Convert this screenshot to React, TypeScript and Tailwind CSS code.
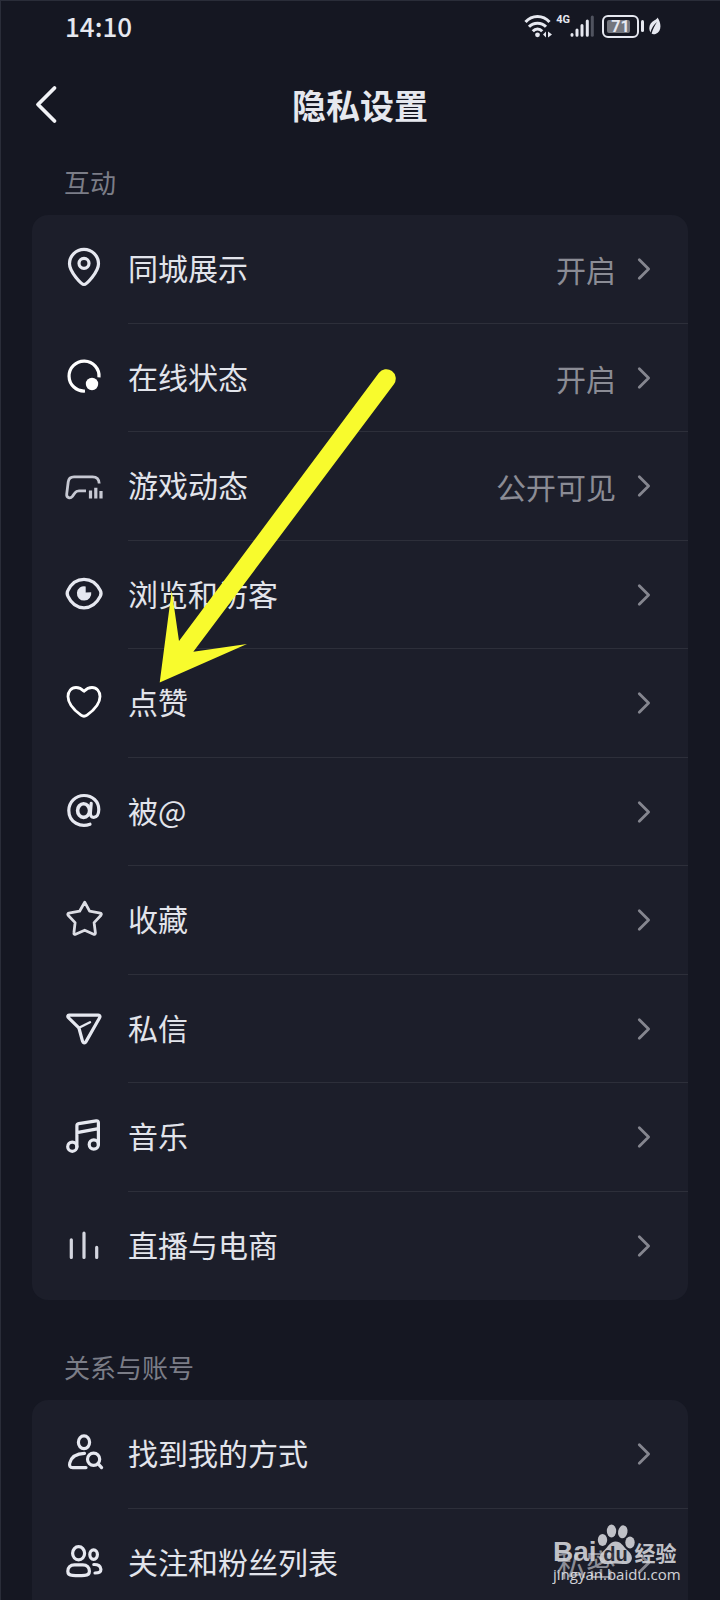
import type { ReactNode } from 'react'

type Item = {
  label: string
  icon: ReactNode
  value?: string
}

function Icon({ children, color = '#e6e8f0' }: { children: ReactNode; color?: string }) {
  return (
    <svg
      viewBox="0 0 40 40"
      className="w-10 h-10 shrink-0"
      fill="none"
      stroke={color}
      strokeWidth="3.2"
      strokeLinecap="round"
      strokeLinejoin="round"
      aria-hidden="true"
    >
      {children}
    </svg>
  )
}

const interaction: Item[] = [
  {
    label: '同城展示',
    value: '开启',
    icon: (
      <Icon>
        <path d="M20 37.5C17.5 37.5 5.5 25 5.5 16.8a14.5 14.5 0 0 1 29 0C34.5 25 22.5 37.5 20 37.5z" />
        <circle cx="20" cy="16.3" r="5" />
      </Icon>
    ),
  },
  {
    label: '在线状态',
    value: '开启',
    icon: (
      <Icon color="#ffffff">
        <path d="M35 21.3A15 15 0 1 0 21 35" strokeLinecap="butt" />
        <circle cx="28" cy="28" r="6.2" fill="#ffffff" stroke="none" />
      </Icon>
    ),
  },
  {
    label: '游戏动态',
    value: '公开可见',
    icon: (
      <Icon color="#c6c8d2">
        <path
          d="M35.2 19.5C35 15 33 12.8 28.5 12.8H10C6.5 12.8 4.6 14.5 4.2 18L2.7 30.2C2.3 34 6.3 35 8.4 32.4L11 28.8C12 27.3 13 26.8 15 26.8H22"
          strokeWidth="2.8"
          strokeLinecap="butt"
        />
        <path d="M26.5 26.5V34.5M31.8 23.8V34.5M37 27V34.5" strokeLinecap="butt" />
      </Icon>
    ),
  },
  {
    label: '浏览和访客',
    icon: (
      <Icon>
        <path d="M20 6.3C28 6.3 33 11 36.3 17.5C37.3 19.4 37.3 21.4 36.3 23.3C33 29.8 28 34.8 20 34.8S7 29.8 3.9 23.3C2.9 21.4 2.9 19.4 3.9 17.5C7 11 12 6.3 20 6.3z" />
        <path d="M21.7 13.4A7.2 7.2 0 1 0 27.2 19.2L21.7 19.6z" fill="#e6e8f0" stroke="none" />
      </Icon>
    ),
  },
  {
    label: '点赞',
    icon: (
      <Icon color="#ffffff">
        <path
          d="M20 10.3C17.5 7.7 14.8 6.5 12 6.5C7.2 6.5 4 10.5 4 15.5C4 23.5 10.5 29.5 17 34.2C19.2 35.8 20.8 35.8 23 34.2C29.5 29.5 36 23.5 36 15.5C36 10.5 32.8 6.5 28 6.5C25.2 6.5 22.5 7.7 20 10.3z"
          strokeWidth="2.8"
        />
      </Icon>
    ),
  },
  {
    label: '被@',
    icon: (
      <Icon>
        <path d="M26 34.2C17 37.5 4.8 33 4.8 20.5C4.8 12 11.5 5.5 20 5.5S34.8 11.5 34.8 19.5C34.8 24.5 32.5 27.3 29.8 27.3C27.5 27.3 26.2 25.8 26.4 23L27.2 13.3" />
        <ellipse cx="19.6" cy="20.6" rx="6" ry="6.8" strokeWidth="3.6" />
      </Icon>
    ),
  },
  {
    label: '收藏',
    icon: (
      <Icon color="#dcdde4">
        <path
          d="M20.7 4.2L25.6 13.2L36.3 15.2C37.4 15.4 37.7 16.4 37 17.2L30.1 24.6L31.4 34.9C31.5 36 30.6 36.7 29.6 36.2L20.7 32.2L11.6 36.2C10.6 36.7 9.7 36 9.9 34.9L11.1 24.6L4.1 17.2C3.4 16.4 3.8 15.4 4.9 15.2L15.6 13.2z"
          strokeWidth="2.8"
        />
      </Icon>
    ),
  },
  {
    label: '私信',
    icon: (
      <Icon>
        <path d="M5 8.2H34.4C36 8.2 36.3 9.5 35.6 10.7L22 34.6C21 36.4 19 36.2 18.5 34.2L15.2 22C15 21.2 14.7 20.7 14.1 20.1L4.4 10.6C3.4 9.6 3.8 8.2 5 8.2z" />
        <path d="M15.5 20.5L26 15.2" strokeWidth="2.4" />
      </Icon>
    ),
  },
  {
    label: '音乐',
    icon: (
      <Icon>
        <circle cx="8.3" cy="31.7" r="4.6" />
        <circle cx="29.8" cy="29.5" r="4.6" />
        <path d="M12.9 31.7V10.8C12.9 9.6 13.5 8.9 14.7 8.7L32.2 5.9C33.8 5.7 34.4 6.3 34.4 7.8V29.5M12.9 17.6L34.4 13.6" />
      </Icon>
    ),
  },
  {
    label: '直播与电商',
    icon: (
      <Icon color="#d4d6df">
        <path d="M7.3 15.8V33.4M20 9.2V33.4M32.7 23.4V33.4" />
      </Icon>
    ),
  },
]

const accounts: Item[] = [
  {
    label: '找到我的方式',
    icon: (
      <Icon>
        <ellipse cx="20" cy="10.3" rx="5.6" ry="6.4" />
        <path d="M20.5 21.3C13 21.5 7.5 24.5 5.8 30.8C5 33.8 6 35.6 8.8 35.6H22" />
        <circle cx="29.6" cy="27.2" r="6.1" />
        <path d="M34 31.6L37.6 35.6" />
      </Icon>
    ),
  },
  {
    label: '关注和粉丝列表',
    value: '私密',
    icon: (
      <Icon>
        <ellipse cx="14.6" cy="12.3" rx="6" ry="6.6" />
        <path d="M10.5 23.8H18.8C23 23.8 25.4 26.6 25.4 30.2C25.4 33.4 23.6 34.2 20.6 34.4C16.6 34.8 12.6 34.8 8.6 34.4C5.6 34.2 3.8 33.4 3.8 30.2C3.8 26.6 6.3 23.8 10.5 23.8z" />
        <ellipse cx="29.6" cy="13.6" rx="3.8" ry="4.7" />
        <path d="M29.8 23.5C34.2 23.3 36.8 25.2 36.9 28.4C37 31 35.4 31.9 31 32" />
      </Icon>
    ),
  },
]

function StatusBar() {
  return (
    <div className="h-[54px] pb-0.5 pl-[65px] pr-[59px] flex items-center justify-between text-[#e6e8f0]">
      <span className="text-[26px] leading-8 font-medium">14:10</span>
      <div className="flex items-center">
        <svg viewBox="0 0 28 24" className="w-7 h-6 mr-1" fill="none" stroke="currentColor" strokeWidth="3" aria-hidden="true">
          <path d="M1.5 8C8 .6 19 .6 25.5 8" />
          <path d="M5 12.8C9.6 8 17.4 8 22 12.8" />
          <path d="M8.8 17.2C11.4 14.4 15.6 14.4 18.2 17.2" />
          <circle cx="13.5" cy="20.8" r="2.4" fill="currentColor" stroke="none" />
          <path d="M19 20.5L22 17.5V23.5zM28 20.5L24 17.5V23.5z" fill="currentColor" stroke="none" />
        </svg>
        <span className="self-start font-['Liberation_Sans_Narrow','Roboto',sans-serif] text-[11px] leading-3 font-bold">4G</span>
        <svg viewBox="0 0 24 24" className="w-6 h-6 mr-2" fill="none" stroke="currentColor" strokeWidth="3" strokeLinecap="round" aria-hidden="true">
          <path d="M2 20.5V21.3M7 16V21.3M12 11.5V21.3M17.3 7V21.3" />
          <path d="M22.3 3V21.3" stroke="#50535f" />
        </svg>
        <div className="w-[37px] h-[23px] p-[3px] border-2 border-current rounded-md flex items-center relative">
          <div className="w-[23px] h-full bg-[#74767e] rounded-xs" />
          <span className="absolute inset-0 text-center text-base leading-5 font-bold font-['Roboto',sans-serif]">71</span>
        </div>
        <div className="w-[3px] h-3 ml-0.5 mr-1 rounded-sm bg-current" />
        <svg viewBox="0 0 13 19" className="w-[13px] h-[19px]" aria-hidden="true">
          <path d="M9.5 .5C13.5 6 14 14.5 7.5 17C5.8 17.6 4.4 17.3 3.6 16.6C5 12 6.6 8.5 9 5C5.6 8 3.6 11.5 2.4 15.4C-.2 10.5 2 5.5 6.5 3.3C8 2.6 9 1.8 9.5 .5z" fill="currentColor" />
        </svg>
      </div>
    </div>
  )
}

function Header() {
  return (
    <header className="h-[103px] pb-0.5 px-[33px] grid grid-cols-[1fr_auto_1fr] items-center">
      <button className="justify-self-start" aria-label="返回">
        <svg viewBox="0 0 26 40" className="w-[26px] h-10" fill="none" stroke="#f2f3f7" strokeWidth="3.8" strokeLinecap="round" strokeLinejoin="round">
          <path d="M21.5 3L5 19.5L21.5 36" />
        </svg>
      </button>
      <h1 className="text-[34px] leading-10 font-bold text-[#e6e8ee]">隐私设置</h1>
    </header>
  )
}

function Row({ item }: { item: Item }) {
  return (
    <li className="group odd:h-[109px] even:h-[108px]">
      <button className="w-full h-full pl-8 flex gap-6 text-left">
        <span className="pt-8">{item.icon}</span>
        <span className="flex-1 h-full pr-[37px] flex items-center border-b border-[#2d2f3a] group-last:border-transparent">
          <span className="flex-1 pb-1 text-[30px] leading-10 text-[#e2e4eb]">{item.label}</span>
          {item.value && <span className="mr-[21px] text-[30px] leading-10 text-[#8b8c95]">{item.value}</span>}
          <svg viewBox="0 0 14 24" className="w-3.5 h-6" fill="none" stroke="#85868f" strokeWidth="2.8" strokeLinecap="round" strokeLinejoin="round" aria-hidden="true">
            <path d="M2.3 2.7L11.6 12L2.3 21.3" />
          </svg>
        </span>
      </button>
    </li>
  )
}

function Section({ title, items }: { title: string; items: Item[] }) {
  return (
    <section>
      <h2 className="pl-16 pb-[13px] text-[26px] leading-10 text-[#7b7d87]">{title}</h2>
      <ul className="mx-8 bg-[#1c1e2a] rounded-2xl">
        {items.map((item) => (
          <Row key={item.label} item={item} />
        ))}
      </ul>
    </section>
  )
}

function Arrow() {
  return (
    <svg viewBox="0 0 250 330" className="absolute left-[150px] top-[360px] w-[250px] h-[330px] pointer-events-none" aria-hidden="true">
      <path d="M9.7 322.5L21.7 230.5L29 281L228.8 13A9.4 9.4 0 0 1 243.9 24.2L43.3 291.8L97 284z" fill="#f8fb2d" />
    </svg>
  )
}

function Watermark() {
  return (
    <div className="absolute right-10 bottom-4 w-[127px] text-[#d2d3d8] opacity-90 pointer-events-none">
      <div className="flex items-end h-10">
        <span className="font-['Liberation_Sans',sans-serif] text-[28px] leading-6 font-bold">Bai</span>
        <div className="relative w-[38px] h-10">
          <svg viewBox="0 0 38 40" className="w-[38px] h-10" fill="currentColor" aria-hidden="true">
            <ellipse cx="5.5" cy="16" rx="4.7" ry="6" />
            <ellipse cx="14.5" cy="7" rx="4.7" ry="6.5" />
            <ellipse cx="25.8" cy="7.8" rx="4.7" ry="6.5" transform="rotate(10 25.8 7.8)" />
            <ellipse cx="33" cy="18.5" rx="4.7" ry="6" />
            <path d="M18.5 17.5C24 17.5 26 22 29 25C33 28.5 35.5 31 34.8 35C34 39.5 30 40.5 26 40C21 39.2 16 39.2 11 40C6.5 40.5 3 39 2.5 35C2 31 5 28.5 8.5 25C12 21.5 13.5 17.5 18.5 17.5z" />
          </svg>
          <span className="absolute inset-x-0 bottom-0 text-center font-['Liberation_Sans',sans-serif] text-xl leading-5 font-bold text-[#2b2d38]">du</span>
        </div>
        <span className="text-[21px] leading-6 font-bold">经验</span>
      </div>
      <div className="font-['Open_Sans',sans-serif] text-[15px] leading-5 text-[#e4e5e9]">jingyan.baidu.com</div>
    </div>
  )
}

export default function App() {
  return (
    <div className="relative h-screen overflow-hidden bg-[#151722] shadow-[inset_1px_1px_0_#2a2d39] font-['Noto_Sans_CJK_SC',sans-serif]">
      <StatusBar />
      <Header />
      <main className="pt-[5px] flex flex-col gap-[47px]">
        <Section title="互动" items={interaction} />
        <Section title="关系与账号" items={accounts} />
      </main>
      <Arrow />
      <Watermark />
    </div>
  )
}
